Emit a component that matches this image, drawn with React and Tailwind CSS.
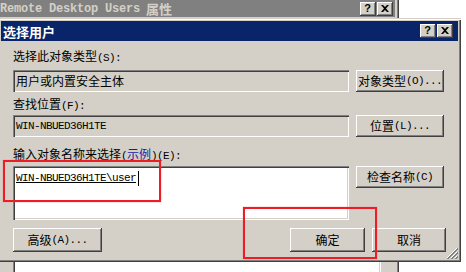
import React from "react";

const raised =
  "bg-[#d4d0c8] shadow-[inset_-1px_-1px_0_#404040,inset_1px_1px_0_#ffffff,inset_-2px_-2px_0_#808080]";
const sunken =
  "shadow-[inset_1px_1px_0_#808080,inset_2px_2px_0_#404040,inset_-1px_-1px_0_#ffffff,inset_-2px_-2px_0_#d4d0c8]";
const mono = "font-['Liberation_Mono',monospace] text-[11px] tracking-[-0.6px]";

function A({ children, className = "" }) {
  return <span className={`${mono} ${className}`}>{children}</span>;
}

function Btn({ className = "", children }) {
  return (
    <div
      className={`flex items-center justify-center text-[12px] leading-[14px] text-black ${raised} ${className}`}
    >
      {children}
    </div>
  );
}

function CapBtn({ kind }) {
  return (
    <div className={`w-[16px] h-[14px] flex items-center justify-center ${raised}`}>
      {kind === "help" ? (
        <span className="font-['Liberation_Sans',sans-serif] font-bold text-[11px] leading-none text-black -mt-[1px] -ml-[1px]">
          ?
        </span>
      ) : (
        <svg width="8" height="7" viewBox="0 0 8 7" className="-mt-[1px] -ml-[1px]">
          <path d="M0 0h2l2 2 2-2h2L5 3.5 8 7H6L4 5 2 7H0l3-3.5z" fill="#000" />
        </svg>
      )}
    </div>
  );
}

export default function App() {
  return (
    <div className="relative w-[466px] h-[272px] overflow-hidden bg-white font-['Noto_Sans_CJK_SC',sans-serif] text-[12px] text-black">
      {/* background window */}
      <div className="absolute left-0 top-0 w-[399px] h-[272px] bg-[#d4d0c8] shadow-[inset_-1px_0_0_#404040,inset_-2px_0_0_#808080,inset_-3px_0_0_#d4d0c8] flex flex-col">
        <div className="h-[17px] w-[395px] bg-[#808080] flex items-center pr-[2px]">
          <span className="font-['Liberation_Mono',monospace] font-bold text-[12px] tracking-[-0.2px] text-[#d4d0c8] leading-none whitespace-pre">
            Remote Desktop Users
          </span>
          <span className="font-bold text-[13px] text-[#d4d0c8] leading-none ml-[6px]">属性</span>
          <div className="ml-auto flex gap-[1px]">
            <CapBtn kind="help" />
            <CapBtn kind="close" />
          </div>
        </div>
        <div className="mt-auto ml-[13px] w-[368px] h-[14px] bg-white shadow-[inset_1px_0_0_#808080,inset_2px_0_0_#404040,inset_-1px_0_0_#ffffff,inset_-2px_0_0_#d4d0c8]" />
      </div>

      {/* dialog */}
      <div className="absolute left-[-2px] top-[18px] w-[463px] h-[244px] p-[3px] flex flex-col bg-[#d4d0c8] shadow-[inset_1px_1px_0_#d4d0c8,inset_2px_2px_0_#ffffff,inset_-1px_-1px_0_#404040,inset_-2px_-2px_0_#808080]">
        <div className="h-[20px] shrink-0 bg-[#0a246a] flex items-center pl-[2px] pr-[5px]">
          <span className="text-white font-bold text-[13px] leading-none">选择用户</span>
          <div className="ml-auto flex gap-[1px]">
            <CapBtn kind="help" />
            <CapBtn kind="close" />
          </div>
        </div>

        <div className="flex flex-col pl-[12px]">
          <div className="mt-[8px] h-[14px] leading-[14px]">
            选择此对象类型<A>(S):</A>
          </div>
          <div className="mt-[7px] flex gap-[7px]">
            <div className={`w-[336px] h-[22px] flex items-center pl-[3px] bg-[#d4d0c8] ${sunken}`}>
              用户或内置安全主体
            </div>
            <Btn className="w-[88px] h-[22px]">
              对象类型<A>(O)...</A>
            </Btn>
          </div>

          <div className="mt-[5px] h-[14px] leading-[14px]">
            查找位置<A>(F):</A>
          </div>
          <div className="mt-[4px] flex gap-[7px]">
            <div className={`w-[336px] h-[22px] flex items-center pl-[3px] bg-[#d4d0c8] ${sunken}`}>
              <A>WIN-NBUED36H1TE</A>
            </div>
            <Btn className="w-[88px] h-[22px]">
              位置<A>(L)...</A>
            </Btn>
          </div>

          <div className="mt-[10px] h-[14px] leading-[14px]">
            输入对象名称来选择<A>(</A>
            <span className="text-[#1a1aa8] underline">示例</span>
            <A>)(E):</A>
          </div>
          <div className="mt-[5px] flex gap-[7px] items-start">
            <div className={`w-[336px] h-[54px] bg-white pl-[3px] pt-[5px] ${sunken}`}>
              <div className="flex items-center h-[15px]">
                <A className="underline leading-[15px]">WIN-NBUED36H1TE\user</A>
                <span className="ml-[2px] w-[1px] h-[15px] bg-black" />
              </div>
            </div>
            <Btn className="w-[88px] h-[22px]">
              检查名称<A>(C)</A>
            </Btn>
          </div>

          <div className="mt-[8px] flex items-center h-[24px]">
            <Btn className="w-[89px] h-[24px]">
              高级<A>(A)...</A>
            </Btn>
            <Btn className="ml-auto w-[75px] h-[24px]">确定</Btn>
            <Btn className="ml-[7px] mr-[12px] w-[74px] h-[24px]">取消</Btn>
          </div>
        </div>

        {/* size grip */}
        <svg
          width="12"
          height="12"
          viewBox="0 0 12 12"
          className="absolute right-[3px] bottom-[3px]"
        >
          <path d="M11 1L1 11M11 5L5 11M11 9L9 11" stroke="#ffffff" strokeWidth="1" />
          <path d="M12 1L1 12M12 2L2 12M12 5L5 12M12 6L6 12M12 9L9 12M12 10L10 12" stroke="#808080" strokeWidth="1" />
        </svg>
      </div>

      {/* red annotation boxes */}
      <div className="absolute left-[3px] top-[160px] w-[158px] h-[42px] border-2 border-[#ee1c24] shadow-[0_0_1px_#ff7070]" />
      <div className="absolute left-[243px] top-[207px] w-[134px] h-[52px] border-2 border-[#ee1c24] shadow-[0_0_1px_#ff7070]" />
    </div>
  );
}
